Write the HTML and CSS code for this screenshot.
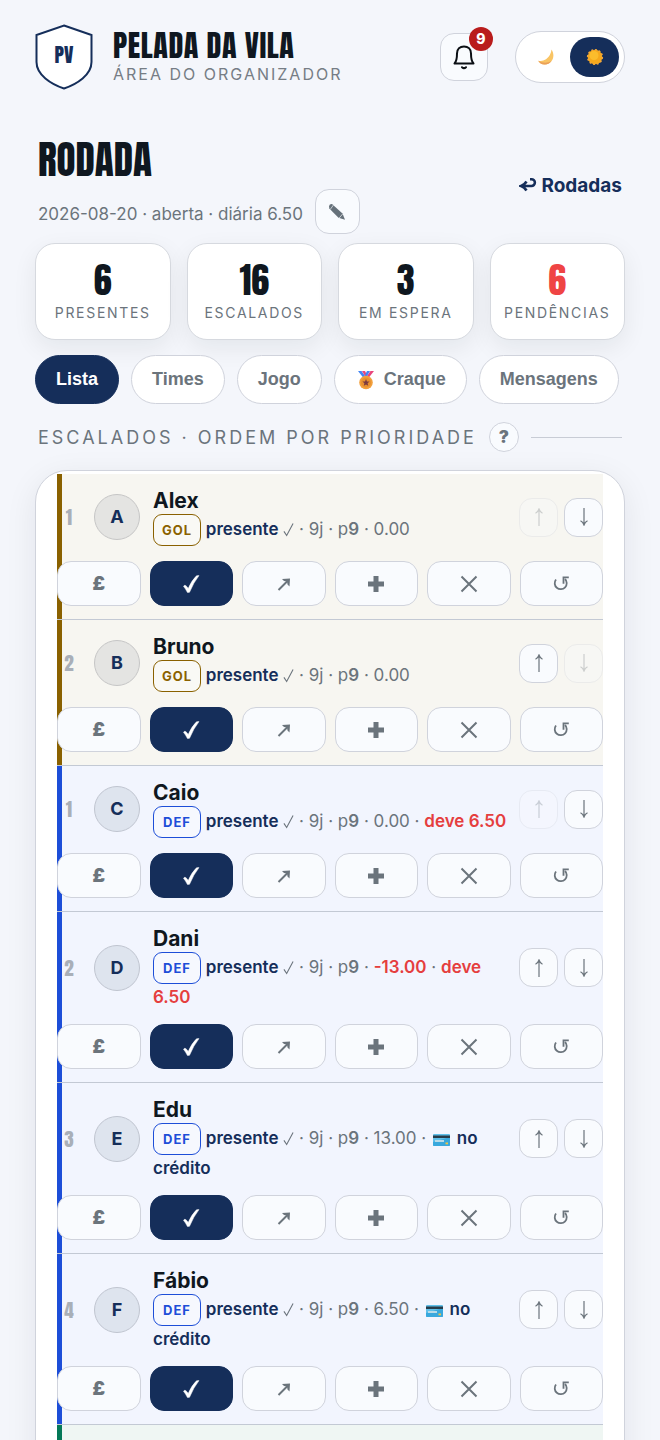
FILE: index.html
```html
<!DOCTYPE html>
<html lang="pt-BR">
<head>
    <meta charset="UTF-8">
    <meta name="viewport" content="width=device-width, initial-scale=1.0">
    <title>Pelada da Vila</title>
    <link rel="stylesheet" href="styles.css">
</head>
<body>

<!-- shared icons -->
<svg class="sprite" aria-hidden="true">
    <symbol id="i-tick" viewBox="0 0 12 16"><path d="M1 10l3 4.5L11 1.5" fill="none" stroke="currentColor" stroke-width="1.2"/></symbol>
    <symbol id="i-check" viewBox="0 0 18 18"><path d="M1.500 11.300Q2.300 10 3.600 10.500Q5 11.300 6.200 13.600Q9.500 5.500 14.500 0.800L17 .6Q11.500 7.500 7.500 17.300L5.500 17.600Q3.500 13.600 1.500 11.300z" fill="currentColor" stroke="currentColor" stroke-width=".5"/></symbol>
    <symbol id="i-out" viewBox="0 0 16 16"><path d="M2.500 14L11.500 5" stroke="currentColor" stroke-width="2" fill="none"/><path d="M6 3L14 2.500L13.500 10.500L11.500 8.500L11 5.500L8 5z" fill="currentColor"/></symbol>
    <symbol id="i-plus" viewBox="0 0 16 16"><path d="M5.500 0h5v5.500H16v5h-5.500V16h-5v-5.500H0v-5h5.500z" fill="currentColor"/></symbol>
    <symbol id="i-x" viewBox="0 0 18 18"><path d="M1.500 1.500l15 15M16.500 1.500l-15 15" stroke="currentColor" stroke-width="2" fill="none"/></symbol>
    <symbol id="i-undo" viewBox="0 0 16 16"><path d="M3 3.500A6 6 0 1 0 12 3" stroke="currentColor" stroke-width="1.800" fill="none"/><path d="M9.600 1.400H15.800M10.500 1.400V7.800" stroke="currentColor" stroke-width="1.800" fill="none"/></symbol>
    <symbol id="i-up" viewBox="0 0 10 18"><path d="M5 1v17M1.500 5.200Q4 4 5 1Q6 4 8.500 5.200" stroke="currentColor" stroke-width="1.200" fill="none"/></symbol>
    <symbol id="i-down" viewBox="0 0 10 18"><path d="M5 0v17M1.500 12.800Q4 14 5 17Q6 14 8.500 12.800" stroke="currentColor" stroke-width="1.200" fill="none"/></symbol>
    <symbol id="i-card" viewBox="0 0 17 12"><rect width="17" height="12" rx="1" fill="#5fc0ea"/><path d="M0 8l17-5v8a1 1 0 0 1-1 1H1a1 1 0 0 1-1-1z" fill="#39a8dd"/><rect y="1.500" width="17" height="2.500" fill="#263c4a"/><rect x="2" y="6" width="9" height="2" fill="#b9dbe8"/><rect x="12.500" y="8.500" width="2.500" height="1.800" fill="#f4c542"/></symbol>
</svg>

<div class="page">
    <header class="topbar">
        <svg class="crest" viewBox="0 0 58 66" role="img" aria-label="PV">
            <path d="M29 1.500L56.500 11v27C56.500 51 42 60 29 64.500C16 60 1.500 51 1.500 38V11z" fill="#fff" stroke="#152e5a" stroke-width="2"/>
            <text x="29" y="39" text-anchor="middle" class="crest-text">PV</text>
        </svg>
        <div class="brand">
            <div class="brand-name">PELADA DA VILA</div>
            <div class="brand-sub">ÁREA DO ORGANIZADOR</div>
        </div>
        <button class="bell" aria-label="Avisos">
            <svg width="24" height="26" viewBox="0 0 24 26" fill="none" stroke="#0b0f14" stroke-width="2" stroke-linecap="round" stroke-linejoin="round"><path d="M2.500 19.500h19C19.500 17.500 19 14.500 19 9.500C19 5 16 2.500 12 2.500S5 5 5 9.500c0 5-.5 8-2.500 10z"/><path d="M10 23.200q2 1.800 4 0"/></svg>
            <span class="badge">9</span>
        </button>
        <div class="theme">
            <button class="theme-btn" aria-label="Escuro">
                <svg width="18" height="18" viewBox="0 0 18 18"><path d="M14.500 1.500C19 8 15 16.500 7.500 16.500Q3 16.300 1.200 12.700Q5 14 9 11.300Q14 7.500 14.500 1.500z" fill="#f9c464"/><path d="M1.200 12.700Q3 16.300 7.500 16.500Q12 16.500 14.500 13Q8 16.500 1.200 12.700z" fill="#eba05a"/></svg>
            </button>
            <button class="theme-btn active" aria-label="Claro">
                <svg width="18" height="18" viewBox="0 0 18 18"><circle cx="9" cy="9" r="7.300" fill="#f5a81c"/><circle cx="9" cy="9" r="7.300" fill="none" stroke="#f2a73b" stroke-width="1.600" stroke-dasharray="2 1.800"/><circle cx="8" cy="7.500" r="4.500" fill="#fbbc2c"/></svg>
            </button>
        </div>
    </header>

    <div class="heading">
        <div>
            <h1>RODADA</h1>
            <div class="heading-sub">
                <span>2026-08-20 · aberta · diária 6.50</span>
                <button class="edit" aria-label="Editar">
                    <svg width="18" height="18" viewBox="0 0 18 18"><path d="M1 3.200Q1.500 .8 4 1L14.500 10.500L17 16.800L10.500 14.800L1.300 5.500z" fill="#66717a"/><path d="M5.800 1.500L2.200 6.500M14.800 10.800L11.200 15" stroke="#dfe3e8" stroke-width=".8"/></svg>
                </button>
            </div>
        </div>
        <a href="#" class="back">
            <svg width="18" height="16" viewBox="0 0 18 16"><path d="M11 2.200h1.500a3.300 3.300 0 0 1 0 6.800H3" fill="none" stroke="currentColor" stroke-width="2.500"/><path d="M7.500 4.500Q5.500 8 2 9Q5.500 10 7.500 13.500" fill="none" stroke="currentColor" stroke-width="2.600"/></svg>
            Rodadas
        </a>
    </div>

    <div class="stats">
        <div class="stat"><div class="stat-num">6</div><div class="stat-label">PRESENTES</div></div>
        <div class="stat"><div class="stat-num">16</div><div class="stat-label">ESCALADOS</div></div>
        <div class="stat"><div class="stat-num">3</div><div class="stat-label">EM ESPERA</div></div>
        <div class="stat"><div class="stat-num red">6</div><div class="stat-label">PENDÊNCIAS</div></div>
    </div>

    <nav class="tabs">
        <button class="tab active">Lista</button>
        <button class="tab">Times</button>
        <button class="tab">Jogo</button>
        <button class="tab">
            <svg width="22" height="20" viewBox="0 0 22 20"><path d="M3 1h3.500l5 7h-3z" fill="#4285f4"/><path d="M7 1h3l2 4-1.500 2z" fill="#e8467c"/><path d="M19 1h-3.500l-5 7h3z" fill="#e8467c"/><path d="M15 1h-3l-2 4 1.500 2z" fill="#4285f4"/><circle cx="11" cy="12.500" r="6.800" fill="#f2a03d"/><circle cx="11" cy="12.500" r="5" fill="#e8912f"/><path d="M11 9l1 2.400 2.600.2-2 1.700.6 2.500-2.200-1.400-2.200 1.400.6-2.500-2-1.700 2.600-.2z" fill="#7c3b3f"/></svg>
            Craque
        </button>
        <button class="tab">Mensagens</button>
    </nav>

    <div class="section-title">
        <h2>ESCALADOS · ORDEM POR PRIORIDADE</h2>
        <button class="help" aria-label="Ajuda">?</button>
        <span class="rule"></span>
    </div>

    <div class="card" id="lista"></div>
</div>

<script src="script.js"></script>
</body>
</html>
```

FILE: styles.css
```css
* {
    box-sizing: border-box;
}
body {
    margin: 0;
    height: 100vh;
    overflow: hidden;
    font-family: Inter, "Liberation Sans", sans-serif;
    background: #f4f6fb;
    color: #0f1720;
}
button {
    font-family: inherit;
    margin: 0;
    padding: 0;
    border: 1px solid #d0d3dc;
    background: #f9fbfe;
    color: #6b747c;
    cursor: pointer;
    display: flex;
    align-items: center;
    justify-content: center;
}
h1, h2 {
    margin: 0;
}
.sprite {
    display: none;
}
.page {
    height: 100vh;
    overflow-y: auto;
    scrollbar-width: none;
    padding: 24px 35px 40px;
}

/* top bar */
.topbar {
    display: flex;
    align-items: center;
    height: 66px;
}
.crest {
    width: 58px;
    height: 66px;
    margin-right: 20px;
}
.crest-text, .brand-name, h1, .stat-num, .pos {
    font-family: Anton, "Liberation Sans Narrow", "Roboto Condensed", "DejaVu Sans Condensed", sans-serif;
    font-weight: 400;
}
.crest-text {
    font-size: 20px;
    fill: #152e5a;
}
.brand {
    flex: 1;
}
.brand-name {
    font-size: 30px;
    line-height: 30px;
    letter-spacing: 0.02em;
}
.brand-sub {
    margin-top: 3px;
    font-size: 16px;
    line-height: 20px;
    letter-spacing: 2px;
    color: #767d85;
    white-space: nowrap;
}
.bell {
    position: relative;
    width: 48px;
    height: 48px;
    border-radius: 14px;
    margin-right: 27px;
}
.badge {
    position: absolute;
    top: -7px;
    right: -6px;
    width: 24px;
    height: 24px;
    border-radius: 12px;
    background: #b91c1c;
    color: #fff;
    font-size: 14px;
    font-weight: 800;
    line-height: 24px;
}
.theme {
    display: flex;
    padding: 5px;
    border: 1px solid #d0d3dc;
    border-radius: 26px;
    background: #fff;
}
.theme-btn {
    width: 49px;
    height: 40px;
    border: none;
    border-radius: 20px;
    background: none;
}
.theme-btn.active {
    background: #152e5a;
}

/* page heading */
.heading {
    display: flex;
    align-items: center;
    justify-content: space-between;
    margin-top: 46px;
    padding: 0 3px;
}
h1 {
    font-size: 39px;
    line-height: 47px;
}
.heading-sub {
    display: flex;
    align-items: center;
    gap: 12px;
    margin-top: 6px;
    font-size: 17px;
    color: #6b747c;
}
.heading-sub span {
    padding-top: 4px;
}
.edit {
    width: 45px;
    height: 45px;
    border-radius: 14px;
}
.back {
    display: flex;
    align-items: center;
    gap: 4px;
    color: #152e5a;
    font-size: 19px;
    font-weight: 700;
    text-decoration: none;
}

/* counters */
.stats {
    display: grid;
    grid-template-columns: repeat(4, 1fr);
    gap: 16px;
    margin-top: 9px;
}
.stat {
    height: 97px;
    padding-top: 16px;
    border: 1px solid #d6d9df;
    border-radius: 20px;
    background: #fff;
    text-align: center;
    box-shadow: 0 8px 24px rgba(15, 23, 32, 0.07);
}
.stat-num {
    font-size: 36px;
    line-height: 40px;
}
.stat-num.red {
    color: #ef4444;
}
.stat-label {
    font-size: 14px;
    line-height: 25px;
    letter-spacing: 0.12em;
    color: #6b747c;
    white-space: nowrap;
}

/* tabs */
.tabs {
    display: flex;
    gap: 12px;
    margin-top: 15px;
}
.tab {
    height: 49px;
    padding: 0 20px;
    gap: 7px;
    border-radius: 25px;
    background: #fff;
    font-family: "Liberation Sans", Arial, sans-serif;
    font-size: 18px;
    font-weight: 700;
}
.tab.active {
    background: #152e5a;
    border-color: #152e5a;
    color: #fff;
}

/* section title */
.section-title {
    display: flex;
    align-items: center;
    gap: 12px;
    margin-top: 18px;
    padding: 0 3px;
}
h2 {
    font-size: 18px;
    font-weight: 400;
    letter-spacing: 3px;
    color: #6b747c;
    white-space: nowrap;
}
.help {
    width: 30px;
    height: 30px;
    border-radius: 15px;
    font-size: 17px;
    font-weight: 900;
}
.rule {
    flex: 1;
    height: 1px;
    background: #c8ccd5;
}

/* player list */
.card {
    margin-top: 18px;
    padding: 3px 21px;
    border: 1px solid #d0d3dc;
    border-radius: 32px;
    background: #fff;
    box-shadow: 0 8px 32px rgba(15, 23, 32, 0.08);
}
.player {
    padding: 13px 0;
    border-bottom: 1px solid #c3c9d4;
    box-shadow: inset 5px 0 var(--pos);
}
.player.gol {
    --pos: #8a6100;
    background: #f7f6f1;
}
.player.def {
    --pos: #1d4ed8;
    background: #f2f5fe;
}
.player.mei {
    --pos: #047857;
    background: #eff6f3;
}
.info {
    display: flex;
    align-items: center;
    gap: 9px;
}
.pos, .avatar {
    margin-right: 4px;
}
.pos {
    width: 24px;
    text-align: center;
    font-size: 19px;
    color: #a9afb8;
}
.avatar {
    flex: none;
    width: 46px;
    height: 46px;
    border: 1px solid #c0c5d0;
    border-radius: 50%;
    background: #dee4ee;
    color: #152e5a;
    font-size: 18px;
    font-weight: 700;
    line-height: 44px;
    text-align: center;
}
.gol .avatar {
    background: #e4e4e2;
    border-color: #c6c6c6;
}
.who {
    flex: 1;
}
.name {
    font-size: 21px;
    font-weight: 700;
    line-height: 27px;
}
.meta {
    font-size: 17px;
    line-height: 25px;
    color: #6b747c;
}
.meta b {
    font-weight: 600;
}
.meta .here {
    color: #152e5a;
}
.meta .owes {
    color: #e53e3e;
}
.meta .tick {
    width: 11px;
    height: 15px;
    vertical-align: -2px;
}
.meta .credit {
    width: 17px;
    height: 12px;
    margin: 0 2px;
    vertical-align: -2px;
}
.chip {
    display: inline-block;
    min-width: 48px;
    height: 32px;
    margin-bottom: 1px;
    padding: 0 7px;
    border: 1px solid var(--pos);
    border-radius: 9px;
    color: var(--pos);
    background: rgba(255, 255, 255, 0.3);
    font-size: 13px;
    font-weight: 700;
    letter-spacing: 1px;
    line-height: 30px;
    text-align: center;
    vertical-align: middle;
}
.moves {
    display: flex;
    gap: 6px;
}
.move {
    width: 39px;
    height: 39px;
    border-radius: 13px;
}
.move:disabled {
    opacity: 0.3;
}
.actions {
    display: grid;
    grid-template-columns: repeat(6, 1fr);
    gap: 9px;
    margin-top: 14px;
}
.action {
    height: 45px;
    border-radius: 14px;
    font-size: 19px;
    font-weight: 900;
}
.action.on {
    background: #152e5a;
    border-color: #152e5a;
    color: #fff;
}
```

FILE: script.js
```js
const card = '<svg class="credit"><use href="#i-card"/></svg>';
const players = [
    { pos: 1, name: "Alex", role: "gol", money: "0.00", up: false, down: true },
    { pos: 2, name: "Bruno", role: "gol", money: "0.00", up: true, down: false },
    { pos: 1, name: "Caio", role: "def", money: '0.00 · <b class="owes">deve 6.50</b>', up: false, down: true },
    { pos: 2, name: "Dani", role: "def", money: '<b class="owes">-13.00</b> · <b class="owes">deve 6.50</b>', up: true, down: true },
    { pos: 3, name: "Edu", role: "def", money: `13.00 · ${card} <b class="here">no crédito</b>`, up: true, down: true },
    { pos: 4, name: "Fábio", role: "def", money: `6.50 · ${card} <b class="here">no crédito</b>`, up: true, down: true },
    { pos: 1, name: "Gabriel", role: "mei", money: "0.00", up: false, down: true }
];

function icon(name, w, h) {
    return `<svg width="${w}" height="${h}"><use href="#i-${name}"/></svg>`;
}

function row(p) {
    return `
    <div class="player ${p.role}">
        <div class="info">
            <div class="pos">${p.pos}</div>
            <div class="avatar">${p.name[0]}</div>
            <div class="who">
                <div class="name">${p.name}</div>
                <div class="meta"><span class="chip">${p.role.toUpperCase()}</span> <b class="here">presente</b> <svg class="tick"><use href="#i-tick"/></svg> · 9j · p<b>9</b> · ${p.money}</div>
            </div>
            <div class="moves">
                <button class="move" aria-label="Subir" ${p.up ? "" : "disabled"}>${icon("up", 10, 18)}</button>
                <button class="move" aria-label="Descer" ${p.down ? "" : "disabled"}>${icon("down", 10, 18)}</button>
            </div>
        </div>
        <div class="actions">
            <button class="action">£</button>
            <button class="action on" aria-label="Presente">${icon("check", 18, 18)}</button>
            <button class="action" aria-label="Mover">${icon("out", 16, 16)}</button>
            <button class="action" aria-label="Adicionar">${icon("plus", 16, 16)}</button>
            <button class="action" aria-label="Remover">${icon("x", 18, 18)}</button>
            <button class="action" aria-label="Desfazer">${icon("undo", 16, 16)}</button>
        </div>
    </div>`;
}

document.getElementById("lista").innerHTML = players.map(row).join("");
```
